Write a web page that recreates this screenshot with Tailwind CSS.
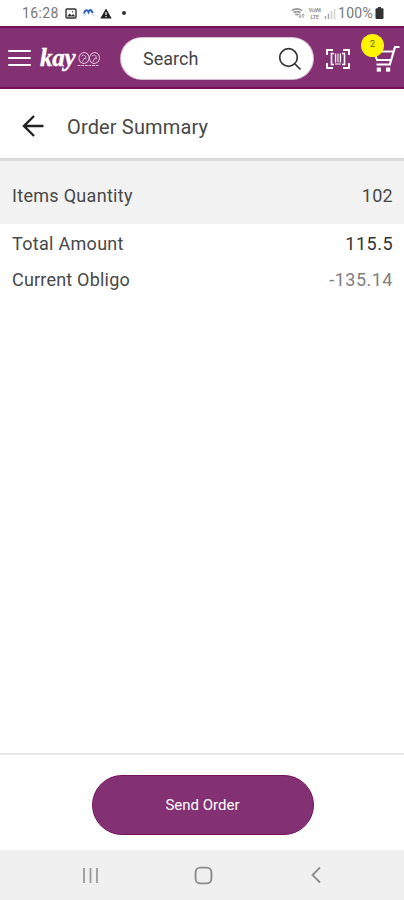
<!DOCTYPE html>
<html lang="en">
<head>
  <meta charset="UTF-8">
  <meta name="viewport" content="width=device-width, initial-scale=1.0">
  <title>Order Summary</title>
  <script src="https://cdn.jsdelivr.net/npm/@tailwindcss/browser@4"></script>
</head>
<body class="flex flex-col h-[900px] overflow-hidden bg-white font-['Roboto',sans-serif] text-[#484848]">
  <!-- Status bar -->
  <div class="flex items-center h-[26px] pl-[22px] pr-[20px] text-[#777]">
    <span class="w-[43px] text-[14px] tracking-[0.4px]">16:28</span>
    <svg class="w-[12px] h-[11px]" viewBox="0 0 12 11" fill="none" stroke="#333">
      <rect x="1" y="1" width="10" height="9" rx="1" stroke-width="1.4"/>
      <path d="M2 8.5l2.5-3 2 2 1.5-1.5 2.5 2.5z" fill="#333" stroke="none"/>
      <circle cx="7.5" cy="3.8" r=".7" fill="#333" stroke="none"/>
    </svg>
    <svg class="ml-[6px] w-[12px] h-[10px]" viewBox="0 0 12 10" fill="none">
      <path d="M1 5.5Q2 2 3.5 2.2T5.5 4Q7 .8 8.3 2.6L9.8 5" stroke="#2b62c4" stroke-width="2"/>
      <path d="M.5 8L3 6.2M9 6l2.5 2.2" stroke="#9cc3e8"/>
    </svg>
    <svg class="ml-[5px] w-[12px] h-[11px]" viewBox="0 0 12 11">
      <path d="M6 .5L11.7 10.5H.3z" fill="#222"/>
      <path d="M6 4v3M6 8v1.2" stroke="#fff" stroke-width="1.2"/>
    </svg>
    <span class="ml-[10px] size-[4px] rounded-full bg-[#333]"></span>
    <svg class="ml-auto w-[15px] h-[12px]" viewBox="0 0 15 12" fill="none" stroke="#999">
      <path d="M.8 3.6Q6 .2 11.2 3.6M2.6 5.8Q6 3.6 9.4 5.8M4.4 7.8Q6 6.8 7.6 7.8" stroke-width="1.7"/>
      <path d="M9 6.5v4M7.8 9.2L9 10.5l1.2-1.3M12 11V7.2M10.8 8.4L12 7.2l1.2 1.2"/>
    </svg>
    <span class="flex flex-col items-center ml-px w-[15px] text-[6px] leading-[7px] font-medium tracking-[-0.5px] text-[#888]">
      <span>VoWi</span>
      <span>LTE</span>
    </span>
    <svg class="ml-[2px] mr-[2px] w-[12px] h-[11px]" viewBox="0 0 12 11" stroke-width="1.5">
      <path d="M1.5 11V8M4.5 11V5.5" stroke="#aaa"/>
      <path d="M7.5 11V3M10.5 11V1" stroke="#d0d0d0"/>
    </svg>
    <span class="w-[37px] text-[14px] tracking-[0.3px]">100%</span>
    <svg class="w-[9px] h-[12px]" viewBox="0 0 9 12" fill="#333"><path d="M3 0h3v1.3h1.5q1 0 1 1V11q0 1-1 1h-6q-1 0-1-1V2.3q0-1 1-1H3z"/></svg>
  </div>

  <!-- App bar -->
  <header class="flex items-center h-[63px] pl-[8px] pr-[4px] pt-[2px] bg-[#843174] border-y-2 border-[#76105f]">
    <svg class="w-[23px] h-[20px]" viewBox="0 0 23 20" stroke="#fff" stroke-width="2" stroke-linecap="round">
      <path d="M1 2h21M1 9h21M1 16h21"/>
    </svg>
    <div class="flex items-center ml-[9px] w-[80px] h-[26px] text-white">
      <span class="w-[37px] font-['Liberation_Serif',serif] font-bold italic text-[25px] leading-[24px] tracking-[-0.3px] pb-[2px] [-webkit-text-stroke:0.4px_white]">kay</span>
      <svg class="w-[24px] h-[20px]" viewBox="0 0 24 20" fill="none" stroke="#dcb9d5">
        <ellipse cx="7" cy="9" rx="5" ry="5.5" transform="rotate(15 7 9)"/>
        <ellipse cx="17.500" cy="9" rx="5" ry="5.500" transform="rotate(15 17.500 9)"/>
        <path d="M4.500 7q2-2 4 0t-2 3l-1 3M6.500 10q2-2 3 0M15 7q2-2 4 0t-2 3l-1 3M17 10q2-2 3 0" stroke-width=".8"/>
        <path d="M-3 16.500h25" stroke-dasharray="3 .6"/>
      </svg>
    </div>
    <div class="flex items-center justify-between w-[194px] h-[43px] pl-[22px] pr-[11px] rounded-full bg-white border border-[#9c5590]/40">
      <span class="text-[18px] text-[#444]">Search</span>
      <svg class="w-[24px] h-[24px]" viewBox="0 0 24 24" fill="none" stroke="#333" stroke-width="1.7">
        <circle cx="10.500" cy="10.500" r="8.800"/>
        <path d="M17 17l5.500 5.500"/>
      </svg>
    </div>
    <svg class="ml-[12px] w-[24px] h-[20px]" viewBox="0 0 24 20" fill="none" stroke="#fff">
      <path d="M1 6V1h6M17 1h6v5M23 14v5h-6M7 19H1v-5" stroke-width="1.900"/>
      <path d="M8 4.500H5.500v11H8M16 4.500h2.500v11H16" stroke-width="1.600"/>
      <path d="M9.500 4.500v9M14.500 4.500v9" stroke-width="1.200"/>
      <path d="M12 4.500v9" stroke-width="2.600" stroke="#c79bbe"/>
      <path d="M9 15h6" stroke-width="1"/>
    </svg>
    <div class="relative ml-auto w-[30px] h-[28px]">
      <svg class="w-[30px] h-[28px]" viewBox="0 0 30 28" fill="none" stroke="#fff" stroke-width="2.200">
        <path d="M29.500 2H25L19.800 19.500H6.500"/>
        <path d="M4 6.500h19" stroke-width="1.900"/>
        <path d="M4 6.500L7 15h13.500" stroke-width="2"/>
        <rect x="7.500" y="23.300" width="2.600" height="2.600" fill="#fff" stroke-width="1.500"/>
        <rect x="16.800" y="23.300" width="2.600" height="2.600" fill="#fff" stroke-width="1.500"/>
      </svg>
      <span class="absolute -left-[9px] -top-[11px] flex items-center justify-center size-[23px] rounded-full bg-[#fff500] text-[9px] text-[#666000]">2</span>
    </div>
  </header>

  <!-- Page title -->
  <div class="flex items-center h-[72px] pl-[22px] pb-px border-b-3 border-[#dcdcdc]">
    <svg class="mt-[5px] w-[22px] h-[22px]" viewBox="0 0 22 22" fill="none" stroke="#222" stroke-width="2.400">
      <path d="M21.500 11H2M12 1L2 11l10 10"/>
    </svg>
    <h1 class="ml-[23px] mt-[7px] text-[20px] tracking-[0.15px]">Order Summary</h1>
  </div>

  <!-- Totals -->
  <main class="flex-1 text-[18px] tracking-[0.3px]">
    <div class="flex items-center justify-between h-[63px] pl-[12px] pr-[11px] pt-[6px] bg-[#f2f2f2]">
      <span>Items Quantity</span>
      <span>102</span>
    </div>
    <div class="flex items-center justify-between h-[38px] pl-[12px] pr-[11px]">
      <span>Total Amount</span>
      <span class="text-[#333] tracking-[0.5px]">115.5</span>
    </div>
    <div class="flex items-center justify-between h-[34px] pl-[12px] pr-[11px]">
      <span class="tracking-[0.2px]">Current Obligo</span>
      <span class="text-[#808080] tracking-[0.5px]">-135.14</span>
    </div>
  </main>

  <div class="flex justify-center h-[97px] pl-px pt-[20px] border-t-2 border-[#e8e8e8]">
    <button class="w-[222px] h-[60px] rounded-full bg-[#843174] border border-[#76105f] text-white text-[15px]">Send Order</button>
  </div>

  <!-- Navigation bar -->
  <nav class="flex items-center h-[50px] pl-[82px] bg-[#f0f0f0]">
    <svg class="w-[17px] h-[17px]" viewBox="0 0 17 17" stroke="#999" stroke-width="1.800"><path d="M2 1v15M8.500 1v15M15 1v15"/></svg>
    <svg class="ml-[95px] w-[19px] h-[19px]" viewBox="0 0 18 18" fill="none" stroke="#8c8c8c" stroke-width="1.800"><rect x="1.500" y="1.500" width="15" height="15" rx="4.500"/></svg>
    <svg class="ml-[98px] w-[10px] h-[18px]" viewBox="0 0 10 18" fill="none" stroke="#8c8c8c" stroke-width="1.800"><path d="M9 1.500L1.500 9 9 16.500"/></svg>
  </nav>
</body>
</html>
